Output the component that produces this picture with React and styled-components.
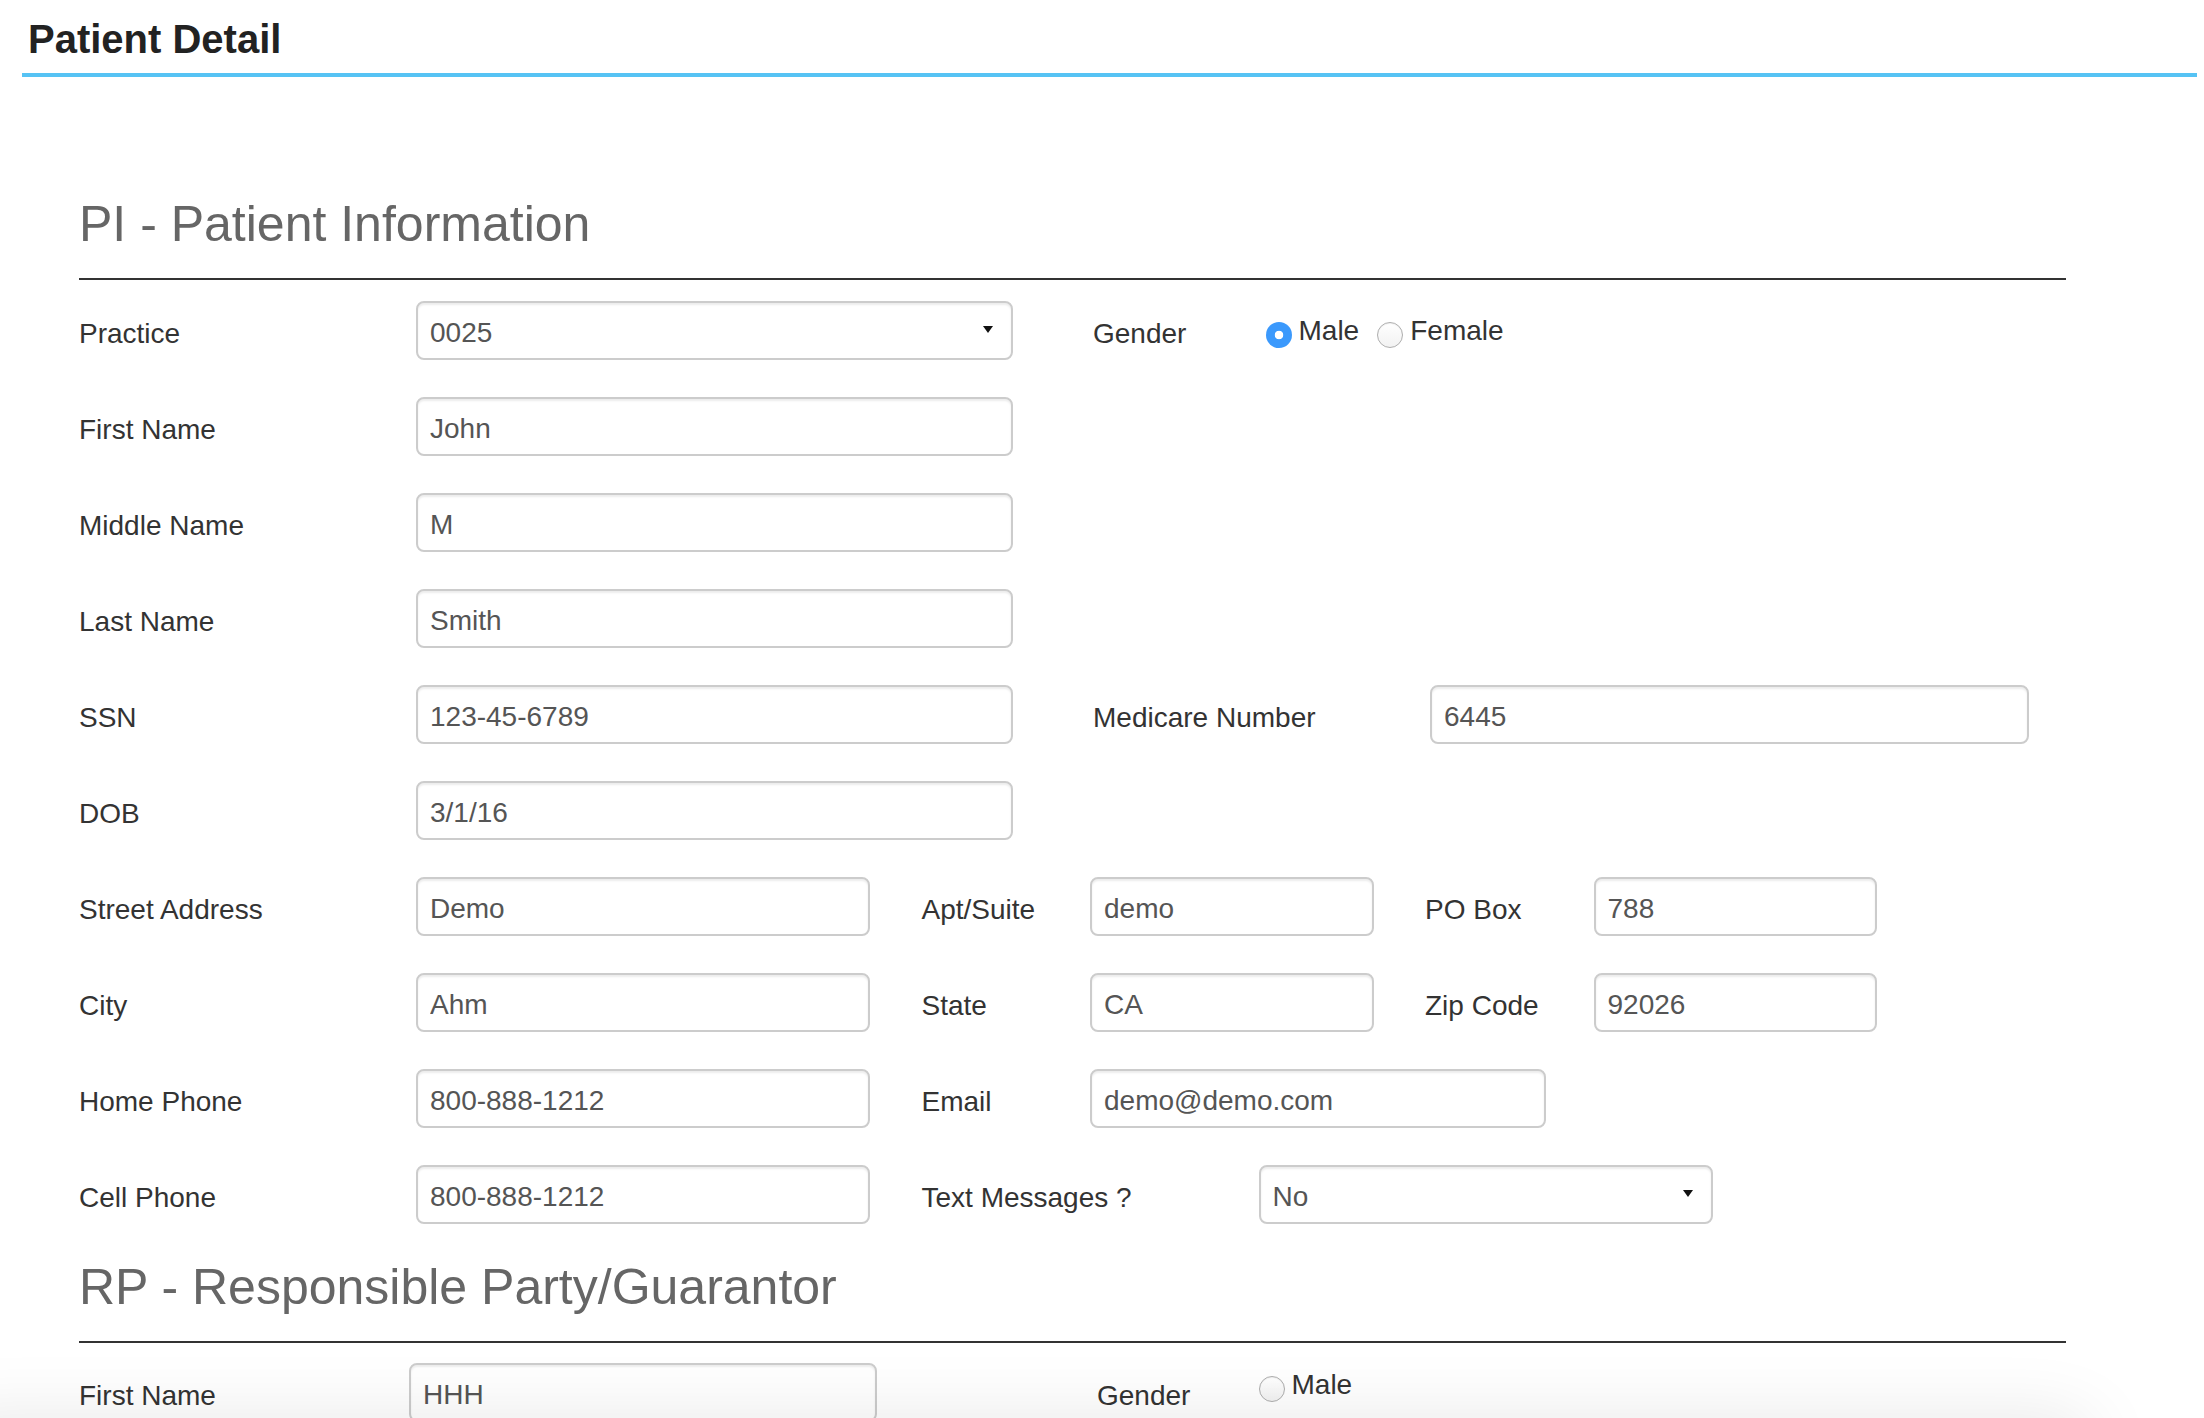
import React from "react";
import styled, { createGlobalStyle } from "styled-components";

const GlobalStyle = createGlobalStyle`
  html, body {
    margin: 0;
    padding: 0;
    background: #fff;
    overflow: hidden;
  }
  body {
    font-family: "Liberation Sans", Arial, Helvetica, sans-serif;
    color: #333;
  }
  * { box-sizing: border-box; }
`;

const Page = styled.div`
  width: 2204px;
  min-height: 1418px;
`;

const Header = styled.header`
  margin: 0 7px 0 22px;
  padding: 16px 0 11px 6px;
  border-bottom: 4px solid #56c3f4;
`;

const Title = styled.h1`
  margin: 0;
  font-size: 40px;
  line-height: 46px;
  font-weight: 700;
  color: #222;
`;

const Section = styled.section`
  margin-left: 79px;
  width: 1987px;
`;

const SectionTitle = styled.h2`
  margin: ${(p) => p.$top}px 0 0;
  font-size: 50px;
  line-height: 54px;
  font-weight: 400;
  color: #666;
`;

const Rule = styled.hr`
  margin: 27px 0 ${(p) => p.$after}px;
  border: 0;
  border-top: 2px solid #333;
  height: 0;
`;

const Row = styled.div`
  display: grid;
  grid-template-columns: repeat(12, 168.5px);
  grid-template-rows: 59px;
  align-items: center;
  justify-items: start;
  height: 59px;
  & + & {
    margin-top: 37px;
  }
`;

const Label = styled.label`
  grid-row: 1;
  grid-column: ${(p) => p.$col};
  margin-left: ${(p) => p.$shift || 0}px;
  margin-top: 6px;
  font-size: 28px;
  line-height: 34px;
  color: #333;
  white-space: nowrap;
`;

const Input = styled.input`
  grid-row: 1;
  grid-column: ${(p) => p.$col};
  margin-left: ${(p) => p.$shift || 0}px;
  width: ${(p) => p.$w}px;
  height: 59px;
  padding: 4px 12px 0;
  border: 2px solid #ccc;
  border-radius: 8px;
  box-shadow: inset 0 2px 2px rgba(0, 0, 0, 0.075);
  background: #fff;
  font-family: inherit;
  font-size: 28px;
  color: #555;
  outline: none;
`;

const SelectWrap = styled.div`
  grid-row: 1;
  grid-column: ${(p) => p.$col};
  position: relative;
  width: ${(p) => p.$w}px;
  height: 59px;
`;

const Select = styled.select`
  appearance: none;
  -webkit-appearance: none;
  width: 100%;
  height: 100%;
  padding: 4px 40px 0 12px;
  border: 2px solid #ccc;
  border-radius: 8px;
  box-shadow: inset 0 2px 2px rgba(0, 0, 0, 0.075);
  background: #fff;
  font-family: inherit;
  font-size: 28px;
  color: #555;
  outline: none;
`;

const Caret = styled.svg`
  position: absolute;
  right: 20px;
  top: 25px;
  width: 10px;
  height: 7px;
  pointer-events: none;
`;

const RadioGroup = styled.div`
  grid-row: 1;
  grid-column: ${(p) => p.$col};
  margin-left: ${(p) => p.$shift || 0}px;
  margin-top: ${(p) => p.$lift || 0}px;
  display: flex;
  align-items: center;
  white-space: nowrap;
`;

const RadioOption = styled.label`
  display: flex;
  align-items: center;
  font-size: 28px;
  line-height: 34px;
  color: #333;
  margin-right: 18px;
`;

const Radio = styled.input`
  appearance: none;
  -webkit-appearance: none;
  width: 26px;
  height: 26px;
  margin: 8px 7px 0 0;
  border-radius: 50%;
  border: ${(p) => (p.checked ? "none" : "1.5px solid #aeaeae")};
  background: ${(p) =>
    p.checked
      ? "radial-gradient(circle, #fff 0 4px, #3b99fc 4.6px)"
      : "linear-gradient(#fff, #f2f2f2)"};
  box-shadow: ${(p) =>
    p.checked ? "none" : "inset 0 1px 1px rgba(0,0,0,0.06)"};
  flex: none;
`;

const BottomShade = styled.div`
  position: fixed;
  left: -60px;
  right: 110px;
  bottom: -60px;
  height: 60px;
  border-radius: 40px;
  box-shadow: 0 0 70px 0 rgba(0, 0, 0, 0.1);
  pointer-events: none;
  z-index: 10;
`;

const SelectField = ({ col, w, value }) => (
  <SelectWrap $col={col} $w={w}>
    <Select defaultValue={value}>
      <option>{value}</option>
    </Select>
    <Caret viewBox="0 0 10 7">
      <path d="M0 0 L10 0 L5 7 Z" fill="#111" />
    </Caret>
  </SelectWrap>
);

const Text = ({ col, w, value, shift }) => (
  <Input $col={col} $w={w} $shift={shift} defaultValue={value} />
);

export default function App() {
  return (
    <Page>
      <GlobalStyle />
      <Header>
        <Title>Patient Detail</Title>
      </Header>

      <Section>
        <SectionTitle $top={120}>PI - Patient Information</SectionTitle>
        <Rule $after={21} />

        <Row>
          <Label $col={1}>Practice</Label>
          <SelectField col={3} w={597} value="0025" />
          <Label $col={7} $shift={3}>Gender</Label>
          <RadioGroup $col={8} $shift={7}>
            <RadioOption>
              <Radio type="radio" name="pi-gender" checked readOnly />
              Male
            </RadioOption>
            <RadioOption>
              <Radio type="radio" name="pi-gender" checked={false} readOnly />
              Female
            </RadioOption>
          </RadioGroup>
        </Row>

        <Row>
          <Label $col={1}>First Name</Label>
          <Text col={3} w={597} value="John" />
        </Row>

        <Row>
          <Label $col={1}>Middle Name</Label>
          <Text col={3} w={597} value="M" />
        </Row>

        <Row>
          <Label $col={1}>Last Name</Label>
          <Text col={3} w={597} value="Smith" />
        </Row>

        <Row>
          <Label $col={1}>SSN</Label>
          <Text col={3} w={597} value="123-45-6789" />
          <Label $col={7} $shift={3}>Medicare Number</Label>
          <Text col={9} w={599} value="6445" shift={3} />
        </Row>

        <Row>
          <Label $col={1}>DOB</Label>
          <Text col={3} w={597} value="3/1/16" />
        </Row>

        <Row>
          <Label $col={1}>Street Address</Label>
          <Text col={3} w={454} value="Demo" />
          <Label $col={6}>Apt/Suite</Label>
          <Text col={7} w={284} value="demo" />
          <Label $col={9} $shift={-2}>PO Box</Label>
          <Text col={10} w={283} value="788" shift={-2} />
        </Row>

        <Row>
          <Label $col={1}>City</Label>
          <Text col={3} w={454} value="Ahm" />
          <Label $col={6}>State</Label>
          <Text col={7} w={284} value="CA" />
          <Label $col={9} $shift={-2}>Zip Code</Label>
          <Text col={10} w={283} value="92026" shift={-2} />
        </Row>

        <Row>
          <Label $col={1}>Home Phone</Label>
          <Text col={3} w={454} value="800-888-1212" />
          <Label $col={6}>Email</Label>
          <Text col={7} w={456} value="demo@demo.com" />
        </Row>

        <Row>
          <Label $col={1}>Cell Phone</Label>
          <Text col={3} w={454} value="800-888-1212" />
          <Label $col={6}>Text Messages ?</Label>
          <SelectField col={8} w={454} value="No" />
        </Row>

        <SectionTitle $top={36}>RP - Responsible Party/Guarantor</SectionTitle>
        <Rule $after={20} />

        <Row>
          <Label $col={1}>First Name</Label>
          <Text col={3} w={468} value="HHH" shift={-7} />
          <Label $col={7} $shift={7}>Gender</Label>
          <RadioGroup $col={8} $lift={-16}>
            <RadioOption>
              <Radio type="radio" name="rp-gender" checked={false} readOnly />
              Male
            </RadioOption>
          </RadioGroup>
        </Row>
      </Section>

      <BottomShade />
    </Page>
  );
}
